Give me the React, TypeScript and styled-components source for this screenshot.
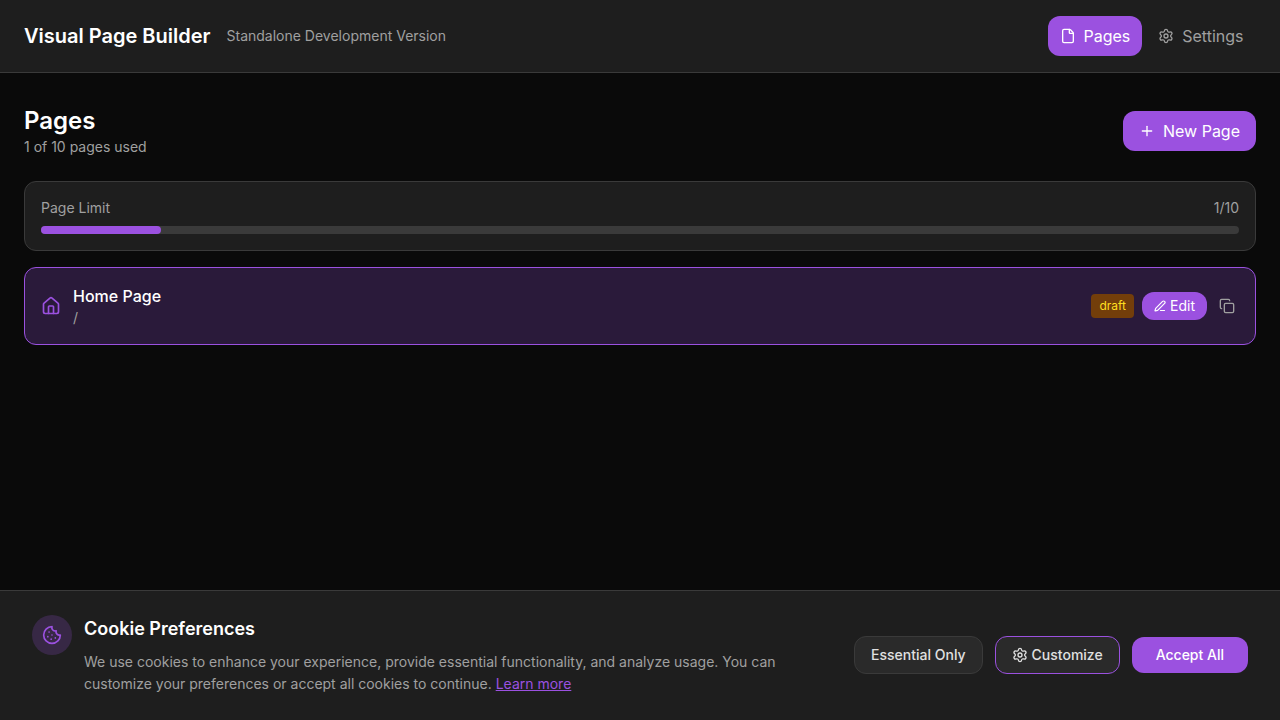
import React from "react";
import styled, { createGlobalStyle } from "styled-components";
import { File, Settings, Plus, House, PenLine, Copy, Cookie } from "lucide-react";

const GlobalStyle = createGlobalStyle`
  *, *::before, *::after { box-sizing: border-box; }
  body {
    margin: 0;
    background: #0a0a0a;
    color: #fff;
    font-family: Inter, "Liberation Sans", sans-serif;
    font-size: 16px;
    line-height: 24px;
    -webkit-font-smoothing: antialiased;
    overflow: hidden;
  }
  h1, h2, h3, p { margin: 0; }
  button { font: inherit; border: 0; cursor: pointer; }
  svg { flex-shrink: 0; display: block; }
`;

const Shell = styled.div`
  display: flex;
  flex-direction: column;
  height: 100vh;
`;

const Header = styled.header`
  display: flex;
  align-items: center;
  justify-content: space-between;
  height: 73px;
  padding: 0 24px;
  background: #1e1e1e;
  border-bottom: 1px solid #3a3a3a;
`;

const Brand = styled.div`
  display: flex;
  align-items: center;
  gap: 16px;
`;

const BrandTitle = styled.h1`
  font-size: 20px;
  font-weight: 600;
  line-height: 28px;
`;

const Muted = styled.span`
  font-size: 14px;
  line-height: 20px;
  color: #a0a0a0;
`;

const Nav = styled.nav`
  display: flex;
  gap: 4px;
  padding-right: 0.5px;
`;

const NavButton = styled.button<{ $active?: boolean }>`
  display: flex;
  align-items: center;
  gap: ${(p) => (p.$active ? "7.5px" : "8px")};
  padding: 8px 12px;
  border-radius: 12px;
  background: ${(p) => (p.$active ? "#9b51e0" : "transparent")};
  color: ${(p) => (p.$active ? "#fff" : "#a0a0a0")};
`;

const Main = styled.main`
  flex: 1;
  min-height: 0;
  padding: 32px 24px 0;
`;

const TitleRow = styled.div`
  display: flex;
  align-items: center;
  justify-content: space-between;
  margin-bottom: 24px;
`;

const TitleBlock = styled.div`
  display: flex;
  flex-direction: column;
`;

const PageTitle = styled.h2`
  font-size: 24px;
  font-weight: 600;
  line-height: 32px;
`;

const NewPageButton = styled.button`
  display: flex;
  align-items: center;
  gap: 8px;
  padding: 8px 16px;
  border-radius: 12px;
  background: #9b51e0;
  color: #fff;
`;

const LimitCard = styled.section`
  padding: 16px;
  margin-bottom: 16px;
  background: #1e1e1e;
  border: 1px solid #3a3a3a;
  border-radius: 12px;
`;

const LimitLabels = styled.div`
  display: flex;
  justify-content: space-between;
  margin-bottom: 8px;
`;

const Track = styled.div`
  height: 8px;
  border-radius: 4px;
  background: #3a3a3a;
`;

const Fill = styled.div`
  height: 8px;
  border-radius: 4px;
  background: #9b51e0;
`;

const PageCard = styled.article`
  display: flex;
  align-items: center;
  justify-content: space-between;
  height: 78px;
  padding: 0 16px;
  background: #2a1a3a;
  border: 1px solid #9b51e0;
  border-radius: 12px;
`;

const PageInfo = styled.div`
  display: flex;
  align-items: center;
  gap: 12px;
  color: #9b51e0;
`;

const PageName = styled.h3`
  font-size: 16px;
  font-weight: 500;
  line-height: 24px;
  color: #fff;
`;

const Actions = styled.div`
  display: flex;
  align-items: center;
  gap: 8px;
`;

const Badge = styled.span`
  padding: 4px 8px;
  border-radius: 4px;
  font-size: 12px;
  line-height: 16px;
  background: #733e0a;
  color: #ffdf20;
`;

const EditButton = styled.button`
  display: flex;
  align-items: center;
  gap: 4px;
  padding: 4px 12px;
  border-radius: 12px;
  font-size: 14px;
  line-height: 20px;
  background: #9b51e0;
  color: #fff;
`;

const IconButton = styled.button`
  padding: 4px;
  background: transparent;
  color: #a0a0a0;
`;

const Banner = styled.footer`
  display: flex;
  align-items: center;
  justify-content: space-between;
  padding: 24px 32px;
  background: #1e1e1e;
  border-top: 1px solid #3a3a3a;
`;

const BannerBody = styled.div`
  display: flex;
  align-items: flex-start;
  gap: 12px;
`;

const CookieBadge = styled.div`
  display: flex;
  align-items: center;
  justify-content: center;
  width: 40px;
  height: 40px;
  border-radius: 50%;
  background: rgba(155, 81, 224, 0.2);
  color: #9b51e0;
`;

const BannerTitle = styled.h3`
  font-size: 18px;
  font-weight: 600;
  line-height: 28px;
  margin-bottom: 8px;
`;

const BannerText = styled.p`
  width: 720px;
  font-size: 14px;
  line-height: 22.75px;
  color: #a0a0a0;
`;

const LearnMore = styled.a`
  color: #9b51e0;
  text-decoration: underline;
`;

const BannerActions = styled.div`
  display: flex;
  align-items: center;
  gap: 12px;
`;

const SecondaryButton = styled.button<{ $accent?: boolean }>`
  display: flex;
  align-items: center;
  gap: 4px;
  padding: 8px 16px;
  border: 1px solid ${(p) => (p.$accent ? "#9b51e0" : "#3a3a3a")};
  border-radius: 12px;
  font-size: 14px;
  font-weight: 500;
  line-height: 20px;
  background: #2a2a2a;
  color: #e0e0e0;
`;

const AcceptButton = styled.button`
  padding: 8px 24px;
  border-radius: 12px;
  font-size: 14px;
  font-weight: 500;
  line-height: 20px;
  background: #9b51e0;
  color: #fff;
`;

const used = 1;
const limit = 10;

export default function App() {
  return (
    <Shell>
      <GlobalStyle />
      <Header>
        <Brand>
          <BrandTitle>Visual Page Builder</BrandTitle>
          <Muted>Standalone Development Version</Muted>
        </Brand>
        <Nav>
          <NavButton $active><File size={16} />Pages</NavButton>
          <NavButton><Settings size={16} />Settings</NavButton>
        </Nav>
      </Header>
      <Main>
        <TitleRow>
          <TitleBlock>
            <PageTitle>Pages</PageTitle>
            <Muted>{used} of {limit} pages used</Muted>
          </TitleBlock>
          <NewPageButton><Plus size={16} />New Page</NewPageButton>
        </TitleRow>
        <LimitCard>
          <LimitLabels>
            <Muted>Page Limit</Muted>
            <Muted>{used}/{limit}</Muted>
          </LimitLabels>
          <Track><Fill style={{ width: `${(used / limit) * 100}%` }} /></Track>
        </LimitCard>
        <PageCard>
          <PageInfo>
            <House size={20} />
            <TitleBlock>
              <PageName>Home Page</PageName>
              <Muted>/</Muted>
            </TitleBlock>
          </PageInfo>
          <Actions>
            <Badge>draft</Badge>
            <EditButton><PenLine size={12} strokeWidth={2.4} />Edit</EditButton>
            <IconButton aria-label="Duplicate page"><Copy size={16} /></IconButton>
          </Actions>
        </PageCard>
      </Main>
      <Banner>
        <BannerBody>
          <CookieBadge><Cookie size={20} /></CookieBadge>
          <div>
            <BannerTitle>Cookie Preferences</BannerTitle>
            <BannerText>
              We use cookies to enhance your experience, provide essential functionality, and analyze usage. You can
              customize your preferences or accept all cookies to continue. <LearnMore>Learn more</LearnMore>
            </BannerText>
          </div>
        </BannerBody>
        <BannerActions>
          <SecondaryButton>Essential Only</SecondaryButton>
          <SecondaryButton $accent><Settings size={16} />Customize</SecondaryButton>
          <AcceptButton>Accept All</AcceptButton>
        </BannerActions>
      </Banner>
    </Shell>
  );
}
